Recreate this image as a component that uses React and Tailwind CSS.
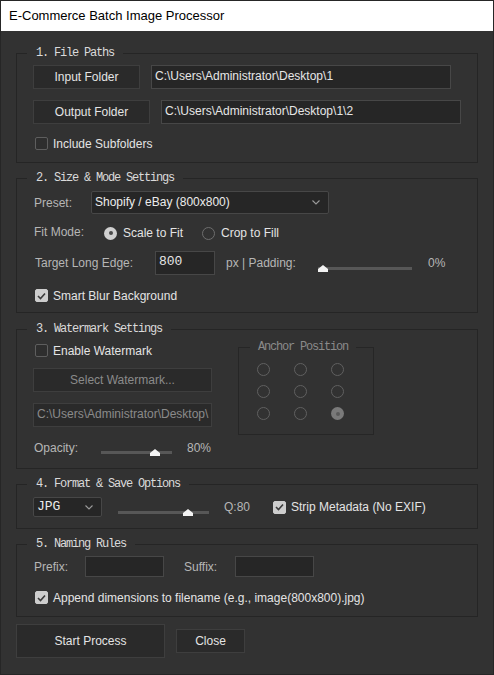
import React from "react";

const LABEL = "text-[#b6b6b6]";
const TEXT = "text-[#e4e4e4]";

function Group({ title, className = "", children }) {
  return (
    <div className={"relative border border-[#252525] " + className}>
      <span className="absolute -top-[8px] left-[10px] bg-[#323232] px-[9px] leading-[14px] text-[12px] tracking-[-1.2px] text-[#dadada] font-['Liberation_Mono','Courier_New',monospace] whitespace-nowrap">
        {title}
      </span>
      {children}
    </div>
  );
}

function Button({ className = "", disabled, children }) {
  return (
    <div
      className={
        "flex items-center justify-center bg-[#2a2a2a] border border-[#3e3e3e] whitespace-nowrap " +
        (disabled ? "text-[#8a8a8a] " : "text-[#e4e4e4] ") +
        className
      }
    >
      {children}
    </div>
  );
}

function TextBox({ className = "", disabled, mono, children }) {
  return (
    <div
      className={
        "flex items-center pl-[3px] pb-[3px] overflow-hidden whitespace-nowrap border " +
        (disabled
          ? "bg-[#2a2a2a] border-[#3e3e3e] text-[#8a8a8a] "
          : "bg-[#262626] border-[#474747] text-[#e6e6e6] ") +
        (mono ? "font-['Liberation_Mono',monospace] text-[13px] " : "") +
        className
      }
    >
      {children}
    </div>
  );
}

function Select({ className = "", mono, children }) {
  return (
    <div
      className={
        "flex items-center justify-between pl-[3px] pr-[8px] bg-[#262626] border border-[#474747] rounded-[2px] text-[#ececec] whitespace-nowrap " +
        (mono ? "font-['Liberation_Mono',monospace] text-[13px] " : "") +
        className
      }
    >
      <span className="pb-[1px]">{children}</span>
      <svg width="8" height="5" viewBox="0 0 8 5" className="text-[#9a9a9a]">
        <path d="M0.5 0.5 L4 4 L7.5 0.5" fill="none" stroke="currentColor" strokeWidth="1.1" />
      </svg>
    </div>
  );
}

function Checkbox({ checked, label, className = "" }) {
  return (
    <div className={"flex items-center gap-[5px] " + className}>
      <div
        className={
          "w-[13px] h-[13px] rounded-[2px] border flex items-center justify-center " +
          (checked ? "bg-[#cdcdcd] border-[#cdcdcd]" : "bg-[#2e2e2e] border-[#5e5e5e]")
        }
      >
        {checked && (
          <svg width="9" height="8" viewBox="0 0 9 8">
            <path d="M1 4 L3.5 6.5 L8 1.5" fill="none" stroke="#3a3a3a" strokeWidth="1.6" />
          </svg>
        )}
      </div>
      <span className={TEXT + " whitespace-nowrap"}>{label}</span>
    </div>
  );
}

function Radio({ checked, dim }) {
  if (checked) {
    return (
      <div
        className={
          "w-[13px] h-[13px] rounded-full flex items-center justify-center " +
          (dim ? "bg-[#7a7a7a]" : "bg-[#d0d0d0]")
        }
      >
        <div className={"w-[4px] h-[4px] rounded-full " + (dim ? "bg-[#5a5a5a]" : "bg-[#4a4a4a]")} />
      </div>
    );
  }
  return (
    <div
      className={
        "w-[13px] h-[13px] rounded-full border-[1.5px] " +
        (dim ? "border-[#606060]" : "border-[#6e6e6e]")
      }
    />
  );
}

function Slider({ width, value }) {
  const left = Math.round((width - 10) * value);
  return (
    <div className="relative h-[17px] shrink-0" style={{ width }}>
      <div className="absolute left-0 right-0 top-[12px] h-[3px] bg-[#575757]" />
      <svg
        width="10"
        height="7"
        viewBox="0 0 10 7"
        className="absolute top-[10px]"
        style={{ left }}
      >
        <path d="M5 0 L10 4 V7 H0 V4 Z" fill="#f2f2f2" />
      </svg>
    </div>
  );
}

export default function App() {
  return (
    <div className="w-[494px] h-[675px] bg-[#323232] border border-[#262626] flex flex-col font-['Liberation_Sans',Arial,sans-serif] text-[12px] leading-[14px] overflow-hidden">
      <div className="h-[30px] shrink-0 bg-white flex items-center pl-[8px] text-[13px] text-black">
        E-Commerce Batch Image Processor
      </div>

      <div className="flex flex-col px-[15px]">
        {/* file paths */}
        <Group title="1. File Paths" className="mt-[22px] pt-[11px] pb-[12px] pl-[16px]">
          <div className="flex items-center gap-[11px]">
            <Button className="w-[107px] h-[24px]">Input Folder</Button>
            <TextBox className="w-[300px] h-[24px]">C:\Users\Administrator\Desktop\1</TextBox>
          </div>
          <div className="flex items-center gap-[11px] mt-[11px]">
            <Button className="w-[117px] h-[24px]">Output Folder</Button>
            <TextBox className="w-[300px] h-[24px]">C:\Users\Administrator\Desktop\1\2</TextBox>
          </div>
          <Checkbox label="Include Subfolders" className="mt-[13px] ml-[2px] h-[13px]" />
        </Group>

        {/* size and mode */}
        <Group title="2. Size & Mode Settings" className="mt-[15px] pt-[12px] pb-[10px] pl-[16px]">
          <div className="flex items-center h-[23px]">
            <span className={LABEL + " w-[58px] pl-[1px]"}>Preset:</span>
            <Select className="w-[238px] h-[23px]">Shopify / eBay (800x800)</Select>
          </div>
          <div className="flex items-center h-[18px] mt-[10px]">
            <span className={LABEL + " w-[71px] pl-[1px] -mt-[3px]"}>Fit Mode:</span>
            <div className="flex items-center gap-[6px] w-[98px]">
              <Radio checked />
              <span className={TEXT}>Scale to Fit</span>
            </div>
            <div className="flex items-center gap-[6px]">
              <Radio />
              <span className={TEXT}>Crop to Fill</span>
            </div>
          </div>
          <div className="flex items-center h-[24px] mt-[9px]">
            <span className={LABEL + " w-[122px] pl-[2px]"}>Target Long Edge:</span>
            <TextBox mono className="w-[60px] h-[24px] items-start pt-[3px]">800</TextBox>
            <span className={LABEL + " ml-[11px] w-[92px] whitespace-nowrap"}>px | Padding:</span>
            <Slider width={94} value={0} />
            <span className={LABEL + " ml-[16px]"}>0%</span>
          </div>
          <Checkbox checked label="Smart Blur Background" className="mt-[14px] ml-[2px] h-[13px]" />
        </Group>

        {/* watermark */}
        <Group title="3. Watermark Settings" className="mt-[16px] pt-[14px] pb-[12px] pl-[16px]">
          <div className="flex items-start">
            <div className="flex flex-col w-[179px]">
              <Checkbox label="Enable Watermark" className="ml-[2px] h-[13px]" />
              <Button disabled className="w-[179px] h-[24px] mt-[11px]">Select Watermark...</Button>
              <TextBox disabled className="w-[179px] h-[24px] mt-[11px]">C:\Users\Administrator\Desktop\</TextBox>
              <div className="flex items-center h-[17px] mt-[12px]">
                <span className={LABEL + " w-[68px] pl-[1px]"}>Opacity:</span>
                <Slider width={71} value={0.8} />
                <span className={LABEL + " ml-[15px]"}>80%</span>
              </div>
            </div>
            <div className="relative ml-[26px] mt-[3px] w-[136px] h-[88px] border border-[#262626]">
              <span className="absolute -top-[8px] left-[11px] bg-[#323232] px-[8px] leading-[14px] text-[12px] tracking-[-1.2px] text-[#8a8a8a] font-['Liberation_Mono','Courier_New',monospace] whitespace-nowrap">
                Anchor Position
              </span>
              <div className="grid grid-cols-[13px_13px_13px] gap-x-[24px] gap-y-[9px] pl-[18px] pt-[15px]">
                {[0, 1, 2, 3, 4, 5, 6, 7, 8].map((i) => (
                  <Radio key={i} dim checked={i === 8} />
                ))}
              </div>
            </div>
          </div>
        </Group>

        {/* format */}
        <Group title="4. Format & Save Options" className="mt-[15px] pt-[12px] pb-[11px] pl-[16px]">
          <div className="flex items-center h-[20px]">
            <Select mono className="w-[69px] h-[20px]">JPG</Select>
            <div className="ml-[16px]">
              <Slider width={91} value={0.8} />
            </div>
            <span className={LABEL + " ml-[15px] w-[49px]"}>Q:80</span>
            <Checkbox checked label="Strip Metadata (No EXIF)" className="h-[13px]" />
          </div>
        </Group>

        {/* naming */}
        <Group title="5. Naming Rules" className="mt-[15px] pt-[11px] pb-[12px] pl-[16px]">
          <div className="flex items-center h-[21px]">
            <span className={LABEL + " w-[52px] pl-[1px]"}>Prefix:</span>
            <TextBox className="w-[79px] h-[21px]" />
            <span className={LABEL + " ml-[20px] w-[51px]"}>Suffix:</span>
            <TextBox className="w-[79px] h-[21px]" />
          </div>
          <Checkbox
            checked
            label="Append dimensions to filename (e.g., image(800x800).jpg)"
            className="mt-[14px] ml-[2px] h-[13px]"
          />
        </Group>

        <div className="flex items-center mt-[7px]">
          <Button className="w-[149px] h-[34px]">Start Process</Button>
          <Button className="w-[69px] h-[24px] ml-[11px]">Close</Button>
        </div>
      </div>
    </div>
  );
}
